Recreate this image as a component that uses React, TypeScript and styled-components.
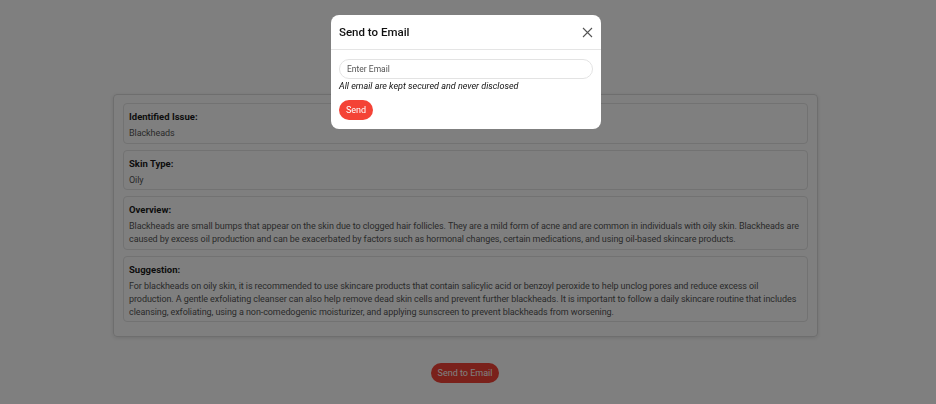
import styled, { createGlobalStyle } from "styled-components";

const GlobalStyle = createGlobalStyle`
  html, body {
    margin: 0;
    padding: 0;
    background: #ffffff;
    font-family: Roboto, "Noto Sans", "Liberation Sans", sans-serif;
  }
  * { box-sizing: border-box; }
`;

const results = [
  { title: "Identified Issue:", text: "Blackheads" },
  { title: "Skin Type:", text: "Oily" },
  {
    title: "Overview:",
    text: "Blackheads are small bumps that appear on the skin due to clogged hair follicles. They are a mild form of acne and are common in individuals with oily skin. Blackheads are caused by excess oil production and can be exacerbated by factors such as hormonal changes, certain medications, and using oil-based skincare products.",
  },
  {
    title: "Suggestion:",
    text: "For blackheads on oily skin, it is recommended to use skincare products that contain salicylic acid or benzoyl peroxide to help unclog pores and reduce excess oil production. A gentle exfoliating cleanser can also help remove dead skin cells and prevent further blackheads. It is important to follow a daily skincare routine that includes cleansing, exfoliating, using a non-comedogenic moisturizer, and applying sunscreen to prevent blackheads from worsening.",
  },
];

const App = () => {
  return (
    <>
      <GlobalStyle />
      <Page>
        <ResultCard>
          {results.map((item) => (
            <Section key={item.title}>
              <SectionTitle>{item.title}</SectionTitle>
              <SectionText>{item.text}</SectionText>
            </Section>
          ))}
        </ResultCard>
        <Footer>
          <PillButton>Send to Email</PillButton>
        </Footer>
      </Page>
      <Backdrop>
        <Modal>
          <ModalHeader>
            <ModalTitle>Send to Email</ModalTitle>
            <CloseButton aria-label="close">
              <svg width="11" height="11" viewBox="0 0 11 11">
                <path d="M1 1L10 10M10 1L1 10" stroke="#555" strokeWidth="1.1" />
              </svg>
            </CloseButton>
          </ModalHeader>
          <ModalBody>
            <EmailInput placeholder="Enter Email" />
            <Note>All email are kept secured and never disclosed</Note>
            <PillButton>Send</PillButton>
          </ModalBody>
        </Modal>
      </Backdrop>
    </>
  );
};

export default App;

const Page = styled.div`
  width: 936px;
  height: 404px;
  padding-top: 94px;
`;

const ResultCard = styled.div`
  width: 705px;
  margin-left: 113px;
  padding: 8px 9px 14px;
  border: 1px solid #dcdcdc;
  border-radius: 4px;
  box-shadow: 0 1px 4px rgba(0, 0, 0, 0.12);
  display: flex;
  flex-direction: column;
  gap: 6px;
`;

const Section = styled.div`
  border: 1px solid #e4e4e4;
  border-radius: 4px;
  padding: 6px 5px 2.5px;
`;

const SectionTitle = styled.div`
  font-size: 9.5px;
  font-weight: 700;
  color: #1a1a1a;
  line-height: 13px;
  margin-bottom: 4px;
`;

const SectionText = styled.div`
  font-size: 9px;
  letter-spacing: -0.08px;
  color: #555;
  line-height: 13px;
`;

const Footer = styled.div`
  display: flex;
  justify-content: center;
  margin-top: 26px;
  padding-right: 6px;
`;

const PillButton = styled.button`
  background: #f44336;
  color: #fff;
  border: 0;
  border-radius: 10px;
  height: 20px;
  padding: 0 7px;
  font-family: inherit;
  font-size: 9px;
  cursor: pointer;
`;

const Backdrop = styled.div`
  position: fixed;
  inset: 0;
  background: rgba(0, 0, 0, 0.5);
  display: flex;
  justify-content: center;
  align-items: flex-start;
  padding: 15px 4px 0 0;
`;

const Modal = styled.div`
  width: 270px;
  background: #fff;
  border-radius: 8px;
  overflow: hidden;
`;

const ModalHeader = styled.div`
  height: 35px;
  display: flex;
  align-items: center;
  justify-content: space-between;
  padding: 0 8px;
  border-bottom: 1px solid #e5e5e5;
`;

const ModalTitle = styled.div`
  font-size: 11.5px;
  font-weight: 500;
  color: #111;
`;

const CloseButton = styled.button`
  background: none;
  border: 0;
  padding: 0;
  display: flex;
  cursor: pointer;
`;

const ModalBody = styled.div`
  padding: 9px 8px 9px;
  display: flex;
  flex-direction: column;
  align-items: flex-start;
`;

const EmailInput = styled.input`
  width: 100%;
  height: 20px;
  border: 1px solid #e3e3e3;
  border-radius: 10px;
  padding: 0 7px;
  font-family: inherit;
  font-size: 8.5px;
  outline: none;
  &::placeholder {
    color: #555;
  }
`;

const Note = styled.div`
  font-size: 9px;
  line-height: 12px;
  font-style: italic;
  color: #111;
  margin: 1px 0 8px;
`;
